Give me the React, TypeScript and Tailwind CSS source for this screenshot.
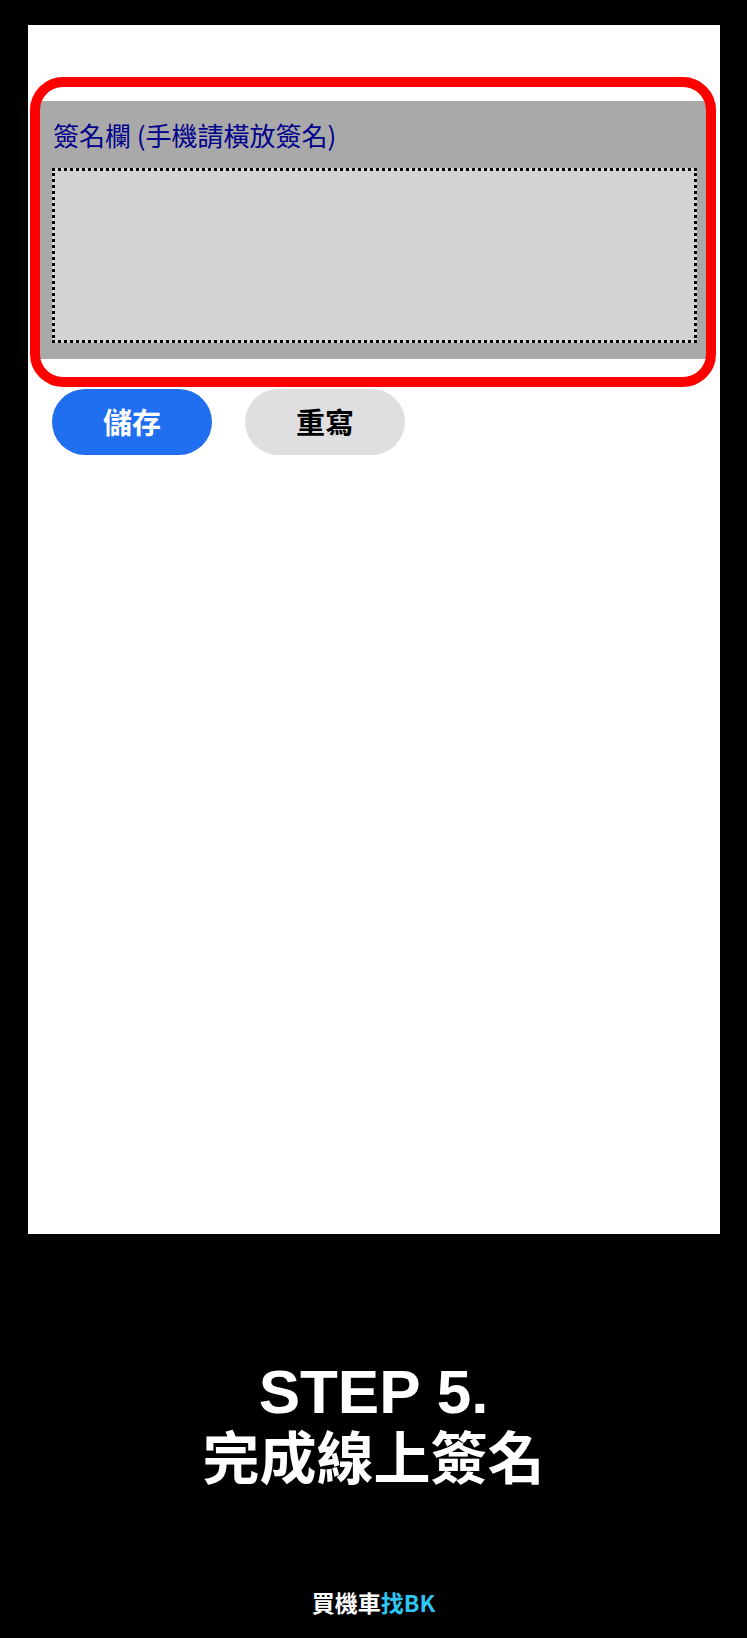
import React from "react";

export default function App() {
  const cjk = { fontFamily: '"Noto Sans CJK TC", "Noto Sans", sans-serif' };
  const latin = { fontFamily: '"Liberation Sans", "Noto Sans CJK TC", sans-serif' };
  return (
    <div className="w-[747px] h-[1638px] bg-black flex flex-col" style={cjk}>
      <div className="relative mt-[25px] ml-[28px] w-[692px] h-[1209px] bg-white flex flex-col">
        <div className="mt-[76px] ml-[12px] w-[669px] h-[258px] bg-[#a9a9a9] flex flex-col">
          <div className="mt-[16px] ml-[13px] h-[36px] text-[26px] leading-[36px] text-[#00008b]">
            簽名欄 (手機請橫放簽名)
          </div>
          <div className="mt-[15px] mx-[12px] h-[175px] bg-[#d3d3d3] border-[3px] border-dotted border-black" />
        </div>
        <div className="mt-[30px] ml-[24px] flex gap-[33px]">
          <button className="w-[160px] h-[66px] rounded-full bg-[#1f6ff0] text-white text-[29px] font-bold flex items-center justify-center">
            儲存
          </button>
          <button className="w-[160px] h-[66px] rounded-full bg-[#dfdfe1] text-black text-[29px] font-bold flex items-center justify-center">
            重寫
          </button>
        </div>
        <div className="absolute left-[2px] top-[52px] w-[686px] h-[310px] border-[10px] border-[#ff0000] rounded-[33px]" />
      </div>
      <div
        className="mt-[125px] text-center text-white font-bold text-[57px] leading-[66px]"
        style={latin}
      >
        <span className="text-[62px] leading-[66px]">STEP 5.</span>
        <br />
        完成線上簽名
      </div>
      <div className="mt-[98px] flex justify-center text-[23px] leading-[24px] font-bold">
        <span className="text-white">買機車</span>
        <span className="text-[#2ec5f3]">找BK</span>
      </div>
    </div>
  );
}
